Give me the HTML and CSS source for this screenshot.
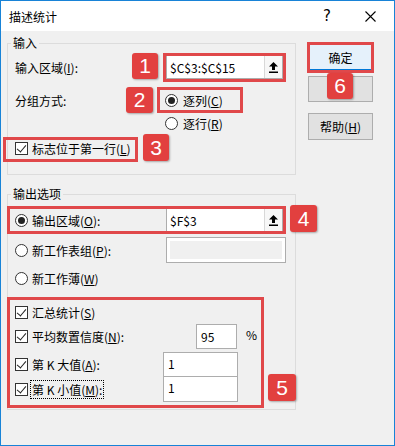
FILE: index.html
```html
<!DOCTYPE html>
<html lang="zh-CN">
<head>
    <meta charset="UTF-8">
    <title>描述统计</title>
    <link rel="stylesheet" href="styles.css">
</head>
<body>
    <div class="window">
        <div class="titlebar">
            <span class="title">描述统计</span>
            <span class="tb-help">?</span>
            <span class="tb-close">
                <svg width="11" height="11" viewBox="0 0 11 11"><path d="M0.5 0.5 L10.5 10.5 M10.5 0.5 L0.5 10.5" stroke="#000" stroke-width="1.1" fill="none"/></svg>
            </span>
        </div>

        <div class="client">
            <div class="left">
                <fieldset class="group group-in">
                    <legend>输入</legend>
                    <div class="row row-range">
                        <span class="lead">输入区域(<u>I</u>):</span>
                        <span class="edit edit-ref">$C$3:$C$15<span class="ref-btn"><svg width="9" height="11" viewBox="0 0 9 11"><path d="M4.5 0 L9 4.5 L6 4.5 L6 8 L3 8 L3 4.5 L0 4.5 Z" fill="#000"/><rect x="0" y="9.5" width="9" height="1.5" fill="#000"/></svg></span></span>
                    </div>
                    <div class="row row-group">
                        <span class="lead">分组方式:</span>
                        <span class="radio checked"></span><span>逐列(<u>C</u>)</span>
                    </div>
                    <div class="row row-byrow">
                        <span class="lead"></span>
                        <span class="radio"></span><span>逐行(<u>R</u>)</span>
                    </div>
                    <div class="row row-labels">
                        <span class="chk"></span><span>标志位于第一行(<u>L</u>)</span>
                    </div>
                </fieldset>

                <fieldset class="group group-out">
                    <legend>输出选项</legend>
                    <div class="row row-out">
                        <span class="opt"><span class="radio checked"></span>输出区域(<u>O</u>):</span>
                        <span class="edit edit-ref">$F$3<span class="ref-btn"><svg width="9" height="11" viewBox="0 0 9 11"><path d="M4.5 0 L9 4.5 L6 4.5 L6 8 L3 8 L3 4.5 L0 4.5 Z" fill="#000"/><rect x="0" y="9.5" width="9" height="1.5" fill="#000"/></svg></span></span>
                    </div>
                    <div class="row row-sheet">
                        <span class="opt"><span class="radio"></span>新工作表组(<u>P</u>):</span>
                        <span class="edit edit-disabled"></span>
                    </div>
                    <div class="row row-book">
                        <span class="opt"><span class="radio"></span>新工作薄(<u>W</u>)</span>
                    </div>
                    <div class="row row-summary">
                        <span class="chk"></span><span>汇总统计(<u>S</u>)</span>
                    </div>
                    <div class="row row-conf">
                        <span class="opt opt-conf"><span class="chk"></span>平均数置信度(<u>N</u>):</span>
                        <span class="edit edit-conf">95</span>
                        <span class="pct">%</span>
                    </div>
                    <div class="row row-k">
                        <span class="opt opt-k"><span class="chk"></span>第 K 大值(<u>A</u>):</span>
                        <span class="edit edit-k">1</span>
                    </div>
                    <div class="row row-k">
                        <span class="opt opt-k"><span class="chk"></span><span class="focus">第 K 小值(<u>M</u>):</span></span>
                        <span class="edit edit-k edit-k-last">1</span>
                    </div>
                </fieldset>
            </div>

            <div class="buttons">
                <button type="button" class="btn btn-default">确定</button>
                <!-- cancel caption is hidden under marker 6 -->
                <button type="button" class="btn" aria-label="取消"></button>
                <button type="button" class="btn btn-help">帮助(<u>H</u>)</button>
            </div>
        </div>

        <!-- annotation marks -->
        <div class="mark mark-1"></div>
        <div class="mark mark-2"></div>
        <div class="mark mark-3"></div>
        <div class="mark mark-4"></div>
        <div class="mark mark-5"></div>
        <div class="mark mark-6"></div>
        <div class="badge badge-1">1</div>
        <div class="badge badge-2">2</div>
        <div class="badge badge-3">3</div>
        <div class="badge badge-4">4</div>
        <div class="badge badge-5">5</div>
        <div class="badge badge-6">6</div>
    </div>
</body>
</html>
```

FILE: styles.css
```css
body {
    margin: 0;
    font-family: "Noto Sans CJK SC", "Noto Sans", sans-serif;
    font-size: 12px;
    color: #000;
}

.window {
    position: relative;
    width: 395px;
    height: 446px;
    box-sizing: border-box;
    border: 1px solid #1883d7;
    background-color: #f0f0f0;
    overflow: hidden;
}

.titlebar {
    display: flex;
    align-items: center;
    height: 30px;
    background-color: #fff;
    padding-left: 8px;
}

.title {
    flex: 1;
    font-size: 12px;
}

.tb-help {
    width: 14px;
    margin-right: 31px;
    font-family: "DejaVu Sans", sans-serif;
    font-size: 15px;
    text-align: center;
}

.tb-close {
    display: flex;
    width: 12px;
    margin-right: 17px;
}

.client {
    display: flex;
    padding: 4px 0 0 6px;
}

.left {
    display: flex;
    flex-direction: column;
    width: 289px;
}

.group {
    margin: 0;
    padding: 0 0 0 7px;
    border: 1px solid #dcdcdc;
    box-sizing: border-box;
    min-width: 0;
}

.group legend {
    margin-left: -4px;
    padding: 0 2px;
    line-height: 16px;
}

.group-in {
    height: 140px;
}

.group-out {
    height: 224px;
    margin-top: 11px;
}

.row {
    display: flex;
    align-items: center;
    height: 22px;
    white-space: nowrap;
}

.lead {
    width: 150px;
    flex: none;
}

.row-range { margin-top: 4px; height: 24px; }
.row-range .lead { width: 151px; }
.row-group { margin-top: 10px; }
.row-byrow { margin-top: 1px; }
.row-labels { margin-top: 3px; }

.row-out { margin-top: 6px; height: 24px; }
.row-sheet { margin-top: 5px; height: 26px; }
.row-book { margin-top: 4px; }
.row-summary { margin-top: 12px; }
.row-conf { margin-top: 1px; height: 25px; }
.row-k { height: 25px; margin-top: 3px; }
.row-k + .row-k { margin-top: 0; }

.opt {
    display: flex;
    align-items: center;
    width: 151px;
    flex: none;
}

.opt-conf { width: 181px; }
.opt-k { width: 148px; }

.radio {
    width: 13px;
    height: 13px;
    box-sizing: border-box;
    border: 1px solid #333;
    border-radius: 50%;
    background-color: #fff;
    margin-right: 5px;
    flex: none;
    display: flex;
    align-items: center;
    justify-content: center;
}

.radio.checked::after {
    content: "";
    width: 7px;
    height: 7px;
    border-radius: 50%;
    background-color: #222;
}

.opt .radio,
.row > .chk,
.opt .chk {
    margin-right: 4px;
}

.chk {
    position: relative;
    width: 13px;
    height: 13px;
    box-sizing: border-box;
    border: 1px solid #333;
    background-color: #fff;
    flex: none;
}

.chk::after {
    content: "";
    position: absolute;
    left: 3px;
    top: 0px;
    width: 4px;
    height: 8px;
    border: solid #222;
    border-width: 0 1px 1px 0;
    transform: rotate(40deg);
}

.edit {
    display: flex;
    align-items: center;
    box-sizing: border-box;
    height: 100%;
    border: 1px solid #adadad;
    background-color: #fff;
    padding-left: 3px;
    flex: none;
}

.edit-ref {
    position: relative;
    width: 117px;
}

.ref-btn {
    position: absolute;
    right: 0;
    top: 0;
    bottom: 0;
    width: 17px;
    display: flex;
    align-items: center;
    justify-content: center;
    border-left: 1px solid #d8d8d8;
    background-color: #f7f7f7;
}

.edit-disabled {
    width: 120px;
    background-color: #f0f0f0;
    box-shadow: inset 0 0 0 3px #fff;
}

.edit-conf {
    width: 41px;
    padding-left: 4px;
}

.pct {
    margin-left: 9px;
    margin-top: -4px;
}

.edit-k {
    width: 75px;
    align-items: flex-start;
    padding-top: 2px;
    padding-left: 4px;
}

.edit-k-last {
    border-top: none;
}

.focus {
    border: 1px dotted #000;
    padding: 0 1px;
    margin-left: -2px;
    line-height: 17px;
}

.buttons {
    display: flex;
    flex-direction: column;
    margin: 9px 0 0 12px;
}

.btn {
    width: 65px;
    height: 26px;
    margin: 0 0 6px 0;
    padding: 0;
    font-family: inherit;
    font-size: 12px;
    color: #000;
    background-color: #e1e1e1;
    border: 1px solid #adadad;
}

.btn-default {
    background-color: #e5f1fb;
    border-color: #0078d7;
}

.btn-help {
    margin-top: 5px;
    height: 27px;
}

/* annotation overlays */
.mark {
    position: absolute;
    border: 3px solid #e0484a;
    box-sizing: border-box;
}

.mark-1 { left: 162px; top: 52px; width: 123px; height: 29px; }
.mark-2 { left: 156px; top: 86px; width: 86px; height: 26px; }
.mark-3 { left: 2px; top: 136px; width: 135px; height: 25px; }
.mark-4 { left: 6px; top: 205px; width: 279px; height: 28px; }
.mark-5 { left: 6px; top: 296px; width: 257px; height: 111px; }
.mark-6 { left: 306px; top: 41px; width: 67px; height: 31px; }

.badge {
    position: absolute;
    width: 26px;
    height: 26px;
    border-radius: 3px;
    background-color: #e2403f;
    box-shadow: 1px 1px 2px rgba(0, 0, 0, 0.3);
    color: #fff;
    font-family: "Liberation Sans", Arial, sans-serif;
    font-size: 21px;
    line-height: 26px;
    text-align: center;
}

.badge-1 { left: 131px; top: 52px; }
.badge-2 { left: 125px; top: 86px; width: 27px; }
.badge-3 { left: 142px; top: 133px; height: 27px; line-height: 27px; }
.badge-4 { left: 289px; top: 204px; width: 27px; height: 27px; line-height: 27px; }
.badge-5 { left: 267px; top: 373px; width: 28px; height: 27px; line-height: 27px; }
.badge-6 { left: 326px; top: 72px; }
```
